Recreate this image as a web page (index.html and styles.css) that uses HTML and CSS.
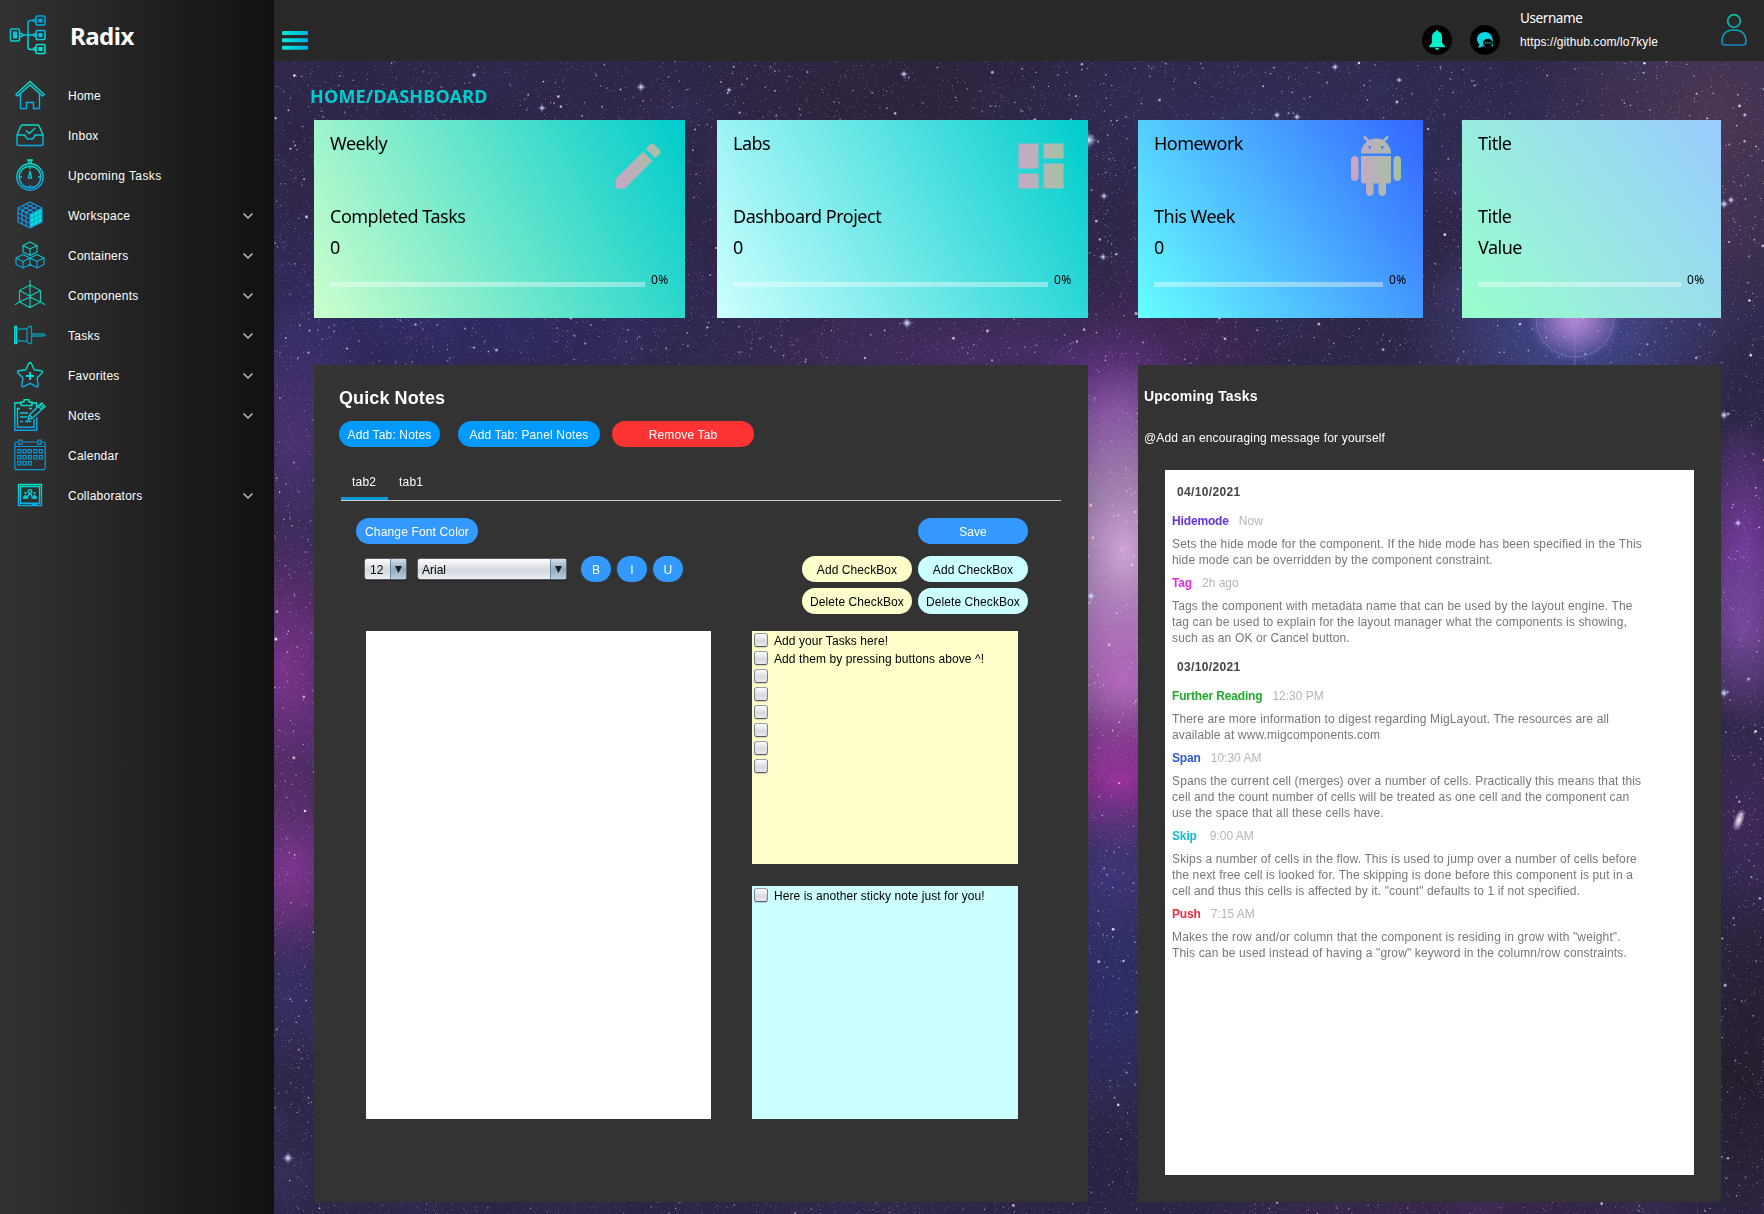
FILE: index.html
```html
<!DOCTYPE html>
<html lang="en">
<head>
<meta charset="utf-8">
<title>Radix</title>
<link rel="stylesheet" href="styles.css">
</head>
<body>
<svg class="defs" width="0" height="0" aria-hidden="true">
  <defs>
    <linearGradient id="down" gradientUnits="userSpaceOnUse" x1="0" y1="2" x2="0" y2="30"><stop offset="0" stop-color="#00e8c4"/><stop offset="1" stop-color="#0aa2ea"/></linearGradient>
    <linearGradient id="up" gradientUnits="userSpaceOnUse" x1="0" y1="2" x2="0" y2="40"><stop offset="0" stop-color="#00a2e8"/><stop offset="1" stop-color="#00efd1"/></linearGradient>
    <linearGradient id="across" gradientUnits="userSpaceOnUse" x1="0" y1="0" x2="32" y2="0"><stop offset="0" stop-color="#00efd1"/><stop offset="1" stop-color="#00a2ea"/></linearGradient>
    <linearGradient id="pastel" gradientUnits="userSpaceOnUse" x1="2" y1="0" x2="22" y2="0"><stop offset="0" stop-color="#c9a5c7"/><stop offset="1" stop-color="#a5c2a4"/></linearGradient>
  </defs>
</svg>

<aside class="sidebar">
  <div class="brand">
    <svg class="logo" width="38" height="42" viewBox="0 0 38 42" fill="none" stroke="url(#up)" stroke-width="1.5">
      <rect x="1.5" y="15" width="9" height="12" rx="1.5"/><rect x="4" y="17.5" width="4" height="7" fill="url(#up)" stroke="none"/>
      <rect x="27" y="2" width="9" height="9" rx="1.2"/><rect x="29.5" y="4.500" width="4" height="4" fill="url(#up)" stroke="none"/>
      <rect x="27" y="16.500" width="9" height="9" rx="1.200"/><rect x="29.500" y="19" width="4" height="4" fill="url(#up)" stroke="none"/>
      <rect x="27" y="30.500" width="9" height="9" rx="1.200"/><rect x="29.500" y="33" width="4" height="4" fill="url(#up)" stroke="none"/>
      <path d="M14 20.980 25 21M24 6.500h-2.500q-2.500 0-2.500 2.500v24q0 2.500 2.500 2.500H24M10.500 19l3 1v2l-3 1M27 5l-2.500.8v1.400l2.500.8M27 19.500l-2.500.8v1.400l2.500.8M27 33.500l-2.500.8v1.400l2.500.8"/>
    </svg>
    <h1>Radix</h1>
  </div>
  <nav class="menu">
    <a class="item"><svg class="ic" viewBox="0 0 32 32"><path d="M1.800 15.500 16 2.500l14.200 13-1.700 1.600L16 6 3.500 17.100zM6.500 15v14.500h6v-6h7v6h6V15"/></svg><span>Home</span></a>
    <a class="item"><svg class="ic" viewBox="0 0 32 32"><path d="M3 16 7 6.800Q7.500 6 8.500 6h15q1 0 1.500.8L29 16v8.500q0 2-2 2H5q-2 0-2-2zM3 16h8c1 5.500 9 5.500 10 0h8M12 11.500l3.200 3 6-5.500"/></svg><span>Inbox</span></a>
    <a class="item wide"><svg class="ic" viewBox="0 0 32 32"><circle cx="16" cy="18" r="13.200"/><circle cx="16" cy="18" r="10.800"/><path d="M13 1h6M14.800 1v3.500M17.200 1v3.500M16 7.500V10M16 26v2.500M5.500 18H8M24 18h2.500M16 13l-1.500 4.500v1.500h3v-1.500z"/></svg><span>Upcoming Tasks</span></a>
    <a class="item"><svg class="ic cube" viewBox="0 0 32 32"><path class="side" d="M16 15.500 28 9.500V23L16 29z"/><path d="M16 3l12 6v14l-12 6-12-6V9zM4 9l12 6.500L28 9M16 15.500V29M8 7l12 6.500M12 5l12 6M24 7l-12 6.500M20 5 8 11M8 11.200V25M12 13.300V27M4 13.700l12 6.300M4 18.300l12 6.200"/><path class="grid" d="M20 13.500V27M24 11.500V25M16 20l12-6.300M16 24.500l12-6.200"/></svg><span>Workspace</span><svg class="chev" viewBox="0 0 12 8"><path d="m1.500 1.500 4.500 4.500 4.500-4.500"/></svg></a>
    <a class="item"><svg class="ic thin" viewBox="0 0 32 32"><path d="M16 3l7 3.500V13l-7 3.500L9 13V6.500zM9 6.500l7 3.500 7-3.500M16 10v6.500M9 15.500l7 3.500v6.500L9 29l-7-3.500V19zM2 19l7 3.500 7-3.500M9 22.500V29M23 15.500l7 3.500v6.500L23 29l-7-3.500V19zM16 19l7 3.500 7-3.500M23 22.500V29"/></svg><span>Containers</span><svg class="chev" viewBox="0 0 12 8"><path d="m1.500 1.500 4.500 4.500 4.500-4.500"/></svg></a>
    <a class="item"><svg class="ic green" viewBox="0 0 32 32"><path d="M16 1v5l10.500 5.500V23L16 28.500 5.500 23V11.500L16 6M5.500 11.500 16 17l10.500-5.500M16 17v11.500M.8 25.800 5.500 23 16 18l10.500 5 4.700 2.800M16 6v11"/></svg><span>Components</span><svg class="chev" viewBox="0 0 12 8"><path d="m1.500 1.500 4.500 4.500 4.500-4.500"/></svg></a>
    <a class="item"><svg class="ic pin" viewBox="0 0 32 32"><path class="cap" d="M.8 7.500h1.700v17H.8z"/><path d="M2.500 10.500l10.500-1M2.500 21.500l10.500 1M15 7.500l-2 2v13l2 2h2.500v-17zM17.500 15H30l1.300 1-1.300 1H17.500z"/></svg><span>Tasks</span><svg class="chev" viewBox="0 0 12 8"><path d="m1.500 1.500 4.500 4.500 4.500-4.500"/></svg></a>
    <a class="item"><svg class="ic" viewBox="0 0 32 32"><path d="M14.700 4.500q1.300-2 2.600 0l3 6.300 6.700 1q2.500.6.800 2.500L23 19l1.200 7q.2 2.400-2.100 1.600L16 24.300l-6.100 3.300q-2.300.8-2.100-1.600L9 19l-4.800-4.700q-1.700-1.900.8-2.500l6.700-1z"/><path class="bold" d="M16 13v8M12 17h8"/></svg><span>Favorites</span><svg class="chev" viewBox="0 0 12 8"><path d="m1.500 1.500 4.500 4.500 4.500-4.500"/></svg></a>
    <a class="item"><svg class="ic" viewBox="0 0 32 32"><path d="M7 4H.8v27.200h22V18.500M17 4h5.500v5M7 6.500V3h3V.8h5V3h3v3.500zM6 9.500H3.500v18.800H20V20M15 9.500h3M6 14h8M6 18h7M6 22.500h3M11 22.500h6M27.500 4l3.500 3.500L18.500 19l-4.500 2 1.300-5zM15.300 16l3.200 3M24 7l3.500 3.500M26 5.500l3.500 3.500"/></svg><span>Notes</span><svg class="chev" viewBox="0 0 12 8"><path d="m1.500 1.500 4.500 4.500 4.500-4.500"/></svg></a>
    <a class="item"><svg class="ic blue" viewBox="0 0 32 32"><path d="M5 3H3Q.8 3 .8 5.500v22.700q0 2.500 2.200 2.500h26q2.200 0 2.200-2.500V5.500Q31.200 3 29 3h-2M9 3h14M5 1h3v4.500H5zM24 1h3v4.500h-3zM.8 7.500h30.400M3.800 10.500h3v3.500h-3zM9 10.500h3v3.500H9zM14.300 10.500h3v3.500h-3zM19.800 10.500h3v3.500h-3zM25.200 10.500h3v3.500h-3zM3.800 16.500h3V20h-3zM9 16.500h3V20H9zM14.300 16.500h3V20h-3zM19.800 16.500h3V20h-3zM25.200 16.500h3V20h-3zM3.800 22.500h3V26h-3zM9 22.500h3V26H9zM14.300 22.500h3V26h-3z"/></svg><span>Calendar</span></a>
    <a class="item"><svg class="ic" viewBox="0 0 32 32"><path d="M4.500 5.500h23v21h-23zM6.500 7.500h19v16.800h-19zM18 25.300h5"/><path class="solid" d="M9 20q0-4 2.500-4 2 0 2 4zM18.500 20q0-4 2-4 2.500 0 2.500 4z"/><path d="M13.800 19.500q0-4.500 2.200-4.500t2.200 4.500"/><circle cx="16" cy="12.500" r="1.800"/><circle class="solid" cx="11.500" cy="14" r="1.200"/><circle class="solid" cx="20.500" cy="14" r="1.200"/></svg><span>Collaborators</span><svg class="chev" viewBox="0 0 12 8"><path d="m1.500 1.500 4.500 4.500 4.500-4.500"/></svg></a>
  </nav>
</aside>

<div class="page">
  <header class="topbar">
    <svg class="burger" width="28" height="20" viewBox="0 0 28 20" fill="url(#across)"><rect x="1" y="0" width="26" height="4" rx="1.200"/><rect x="1" y="7.300" width="26" height="4" rx="1.200"/><rect x="1" y="14.800" width="26" height="4" rx="1.200"/></svg>
    <svg class="round" viewBox="0 0 30 30"><circle cx="15" cy="15" r="15"/><path fill="#00efd1" d="M15 5q1.200 0 1.300 1.500Q20 7.500 20 12v5.500l3 4v.8H7v-.8l3-4V12q0-4.500 3.700-5.500Q13.800 5 15 5zM13 23h4q-.5 2-2 2t-2-2z"/></svg>
    <svg class="round chat" viewBox="0 0 30 30"><circle cx="15" cy="15" r="15"/><path fill="#00d5e2" d="M15 7c-4.500 0-8 3-8 7.200 0 2.300 1 4.200 2.600 5.400L8 22.500c2 0 3.500-.5 4.500-1.300h10.800q-.8-1.500-.5-2.500C23.500 11.500 20 7 15 7z"/><ellipse cx="17.800" cy="17.800" rx="4.800" ry="4"/><path fill="#00e0e0" d="M15 17.200h1.300v1.300H15zM17.200 17.200h1.300v1.300h-1.300zM19.400 17.200h1.300v1.300h-1.300z"/></svg>
    <div class="user"><div class="name">Username</div><div class="url">https://github.com/lo7kyle</div></div>
    <svg class="person" width="26" height="34" viewBox="0 0 26 34" fill="none" stroke="url(#down)" stroke-width="1.700" opacity=".8"><circle cx="13" cy="8" r="6.300"/><path d="M4 32q-3 0-3-3 0-12 12-12t12 12q0 3-3 3z"/></svg>
  </header>

  <main class="stage">
    <canvas class="sky" id="sky" width="1490" height="1153"></canvas>
    <div class="content">
      <h2 class="crumb">HOME/DASHBOARD</h2>
      <div class="board">
        <div class="cards">
          <section class="card weekly"><div class="head"><h3>Weekly</h3><svg class="big" viewBox="0 0 24 24"><path d="M3 17.250V21h3.750L17.810 9.940l-3.750-3.750L3 17.250zM20.710 7.040c.39-.39.39-1.020 0-1.410l-2.340-2.340c-.39-.39-1.020-.39-1.410 0l-1.830 1.830 3.750 3.750 1.830-1.830z"/></svg></div><p>Completed Tasks</p><p class="val">0</p><div class="meter"><i></i><span>0%</span></div></section>
          <section class="card labs"><div class="head"><h3>Labs</h3><svg class="big" viewBox="0 0 24 24"><path d="M3 13h8V3H3v10zm0 8h8v-6H3v6zm10 0h8V11h-8v10zm0-18v6h8V3h-8z"/></svg></div><p>Dashboard Project</p><p class="val">0</p><div class="meter"><i></i><span>0%</span></div></section>
        </div>
        <div class="cards">
          <section class="card homework"><div class="head"><h3>Homework</h3><svg class="big" viewBox="0 0 24 24"><path d="M6 18c0 .55.45 1 1 1h1v3.500c0 .83.67 1.500 1.500 1.500s1.500-.67 1.500-1.500V19h2v3.500c0 .83.67 1.500 1.500 1.500s1.500-.67 1.500-1.500V19h1c.55 0 1-.45 1-1V8H6v10zM3.500 8C2.670 8 2 8.670 2 9.500v7c0 .83.67 1.500 1.500 1.500S5 17.330 5 16.500v-7C5 8.670 4.330 8 3.500 8zm17 0c-.83 0-1.500.67-1.500 1.500v7c0 .83.67 1.500 1.500 1.500s1.500-.67 1.500-1.500v-7c0-.83-.67-1.500-1.500-1.500zm-4.970-5.840l1.300-1.300c.2-.2.2-.51 0-.71-.2-.2-.51-.2-.71 0l-1.480 1.480C13.850 1.230 12.950 1 12 1c-.96 0-1.860.23-2.660.63L7.850.15c-.2-.2-.51-.2-.71 0-.2.2-.2.51 0 .71l1.310 1.310C6.970 3.260 6 5.010 6 7h12c0-1.990-.97-3.750-2.470-4.840zM10 5H9V4h1v1zm5 0h-1V4h1v1z"/></svg></div><p>This Week</p><p class="val">0</p><div class="meter"><i></i><span>0%</span></div></section>
          <section class="card blank"><div class="head"><h3>Title</h3></div><p>Title</p><p class="val">Value</p><div class="meter"><i></i><span>0%</span></div></section>
        </div>

        <section class="panel notes">
          <h3 class="title">Quick Notes</h3>
          <div class="actions"><button class="btn w1">Add Tab: Notes</button><button class="btn w2">Add Tab: Panel Notes</button><button class="btn w3 red">Remove Tab</button></div>
          <div class="tabs"><span class="tab on">tab2</span><span class="tab">tab1</span></div>
          <div class="tools">
            <div class="format">
              <button class="btn soft font">Change Font Color</button>
              <div class="line">
                <div class="combo size"><span>12</span><b></b></div>
                <div class="combo face"><span>Arial</span><b></b></div>
                <button class="btn soft sq">B</button><button class="btn soft sq">I</button><button class="btn soft sq">U</button>
              </div>
            </div>
            <div class="checks">
              <button class="btn soft save">Save</button>
              <button class="btn yellow">Add CheckBox</button><button class="btn cyan">Add CheckBox</button>
              <button class="btn yellow">Delete CheckBox</button><button class="btn cyan">Delete CheckBox</button>
            </div>
          </div>
          <div class="sheets">
            <div class="paper"></div>
            <div class="stickies">
              <ul class="sticky yellow"><li><i></i>Add your Tasks here!</li><li><i></i>Add them by pressing buttons above ^!</li><li><i></i></li><li><i></i></li><li><i></i></li><li><i></i></li><li><i></i></li><li><i></i></li></ul>
              <ul class="sticky cyan"><li><i></i>Here is another sticky note just for you!</li></ul>
            </div>
          </div>
        </section>

        <section class="panel upcoming">
          <h3 class="title">Upcoming Tasks</h3>
          <p class="cheer">@Add an encouraging message for yourself</p>
          <div class="feed">
            <h4>04/10/2021</h4>
            <div class="post"><b class="violet">Hidemode</b><time>Now</time></div>
            <p>Sets the hide mode for the component. If the hide mode has been specified in the This<br>hide mode can be overridden by the component constraint.</p>
            <div class="post"><b class="pink">Tag</b><time>2h ago</time></div>
            <p>Tags the component with metadata name that can be used by the layout engine. The<br>tag can be used to explain for the layout manager what the components is showing,<br>such as an OK or Cancel button.</p>
            <h4>03/10/2021</h4>
            <div class="post"><b class="green">Further Reading</b><time>12:30 PM</time></div>
            <p>There are more information to digest regarding MigLayout. The resources are all<br>available at www.migcomponents.com</p>
            <div class="post"><b class="blue">Span</b><time>10:30 AM</time></div>
            <p>Spans the current cell (merges) over a number of cells. Practically this means that this<br>cell and the count number of cells will be treated as one cell and the component can<br>use the space that all these cells have.</p>
            <div class="post"><b class="teal">Skip</b><time>9:00 AM</time></div>
            <p>Skips a number of cells in the flow. This is used to jump over a number of cells before<br>the next free cell is looked for. The skipping is done before this component is put in a<br>cell and thus this cells is affected by it. "count" defaults to 1 if not specified.</p>
            <div class="post"><b class="scarlet">Push</b><time>7:15 AM</time></div>
            <p>Makes the row and/or column that the component is residing in grow with "weight".<br>This can be used instead of having a "grow" keyword in the column/row constraints.</p>
          </div>
        </section>
      </div>
    </div>
  </main>
</div>
<script src="sky.js"></script>
</body>
</html>
```
FILE: styles.css
```css
* { box-sizing: border-box; margin: 0; padding: 0; }
body {
  display: flex;
  width: 1764px;
  height: 1214px;
  overflow: hidden;
  background: #282828;
  color: #fff;
  font: 12px/16px "Liberation Sans", Arial, sans-serif;
  letter-spacing: .2px;
  white-space: nowrap;
}
.defs { position: absolute; }
ul { list-style: none; }

/* sidebar */
.sidebar { flex: none; width: 274px; background: linear-gradient(90deg, #333, #111); }
.brand { display: flex; height: 75px; padding: 14px 0 0 9px; }
.brand h1 { margin: 4px 0 0 23px; font: bold 24px/36px "Noto Sans", "Open Sans", sans-serif; letter-spacing: -.5px; }
.item { display: flex; align-items: center; height: 40px; padding: 0 20px 0 14px; letter-spacing: .25px; }
.item.wide { letter-spacing: .42px; }
.item span { flex: 1; margin: 1px 0 0 22px; }
.ic { width: 32px; height: 32px; fill: none; stroke: url(#down); stroke-width: 1.4; }
.ic .solid { fill: #06c8d0; stroke: none; }
.ic.thin { stroke-width: 1.1; }
.ic.green { stroke: #0fc7b5; stroke-width: 1.2; }
.ic.pin { stroke: #0b93ae; }
.ic.pin .cap { stroke: #00e0d8; }
.ic.blue { stroke: #0b9bdc; stroke-width: 1.2; }
.ic .bold { stroke: #00e0e8; stroke-width: 1.8; }
.ic.cube { stroke: #1597e5; stroke-width: 1.2; }
.ic.cube .side { fill: #00e5df; stroke: none; }
.ic.cube .grid { stroke: #0d8fb8; stroke-width: .8; }
.chev { width: 12px; height: 8px; margin-top: 1px; fill: none; stroke: #bbb; stroke-width: 1.5; }

/* top bar */
.page { display: flex; flex-direction: column; flex: 1; }
.topbar { display: flex; height: 61px; padding-left: 7px; background: #282828; }
.burger { margin: 30.5px auto 0 0; }
.round { width: 30px; height: 30px; margin: 25px 18px 0 0; }
.round.chat { margin-right: 20px; }
.user { width: 201px; padding-top: 9px; }
.name { font: 13.5px/18px "Noto Sans", "Open Sans", sans-serif; letter-spacing: -.4px; }
.url { margin-top: 7px; letter-spacing: .1px; }
.person { margin: 13px 17px 0 0; }

/* stage */
.stage { display: grid; flex: 1; background: #30284c; }
.sky, .content { grid-area: 1 / 1; }
.content { z-index: 1; padding: 0 43px 12px 40px; }
.crumb { height: 59px; margin-left: -4px; padding-top: 23px; color: #0cc; font: bold 18px/25px "Noto Sans", "Open Sans", sans-serif; letter-spacing: .2px; }
.board { display: grid; grid-template: 198px 837px / 774px 583px; gap: 47px 50px; }
.cards { display: flex; justify-content: space-between; }

.card { width: 371px; padding: 16px; color: #000; font: 18px/24px "Noto Sans", "Open Sans", sans-serif; letter-spacing: -.5px; }
.card h3 { margin-top: -5px; font: inherit; }
.head { display: flex; justify-content: space-between; height: 68px; }
.big { width: 60px; height: 60px; margin-right: 1px; fill: url(#pastel); }
.val { margin-top: 7px; }
.meter { display: flex; margin-top: 8px; }
.meter i { flex: 1; height: 5px; margin: 15px 6px 0 0; background: rgba(255, 255, 255, .4); }
.meter span { width: 18px; margin-top: 5px; font-size: 12px; line-height: 16px; letter-spacing: .4px; }
.weekly { background: linear-gradient(61.9deg, #cfc, #0cc); }
.labs { background: linear-gradient(61.9deg, #cff, #0cc); }
.homework { width: 285px; background: linear-gradient(55.2deg, #6ff, #36f); }
.blank { width: 259px; background: linear-gradient(52.6deg, #9fc, #9cf); }

/* quick notes */
.panel { background: #333; }
.notes .title { padding: 22px 0 0 25px; font-size: 18px; line-height: 22px; letter-spacing: .1px; }
.actions { display: flex; margin: 12px 0 0 25px; }
.btn { height: 26px; border: 0; border-radius: 13px; background: #09f; color: #fff; font: inherit; letter-spacing: .15px; padding-top: 1px; }
.btn.soft { background: #39f; }
.btn.red { background: #f33; }
.btn.yellow { background: #ffc; color: #000; }
.btn.cyan { background: #cff; color: #000; }
.w1 { width: 101px; margin-right: 18px; }
.w2 { width: 142px; margin-right: 12px; }
.w3 { width: 142px; }
.tabs { display: flex; width: 720px; height: 34px; margin: 20px 0 0 27px; border-bottom: 1px solid #ccc; }
.tab { width: 47px; padding: 7px 0 0 11px; }
.tab.on { border-bottom: 3px solid #0a9bd8; }
.tools { display: flex; justify-content: space-between; height: 96px; margin: 17px 60px 0 42px; }
.font { width: 122px; }
.line { display: flex; align-items: center; margin-top: 12px; }
.combo { display: flex; height: 22px; padding-left: 5px; border: 1px solid #5b6068; border-radius: 3px; background: linear-gradient(#fff, #d3d7de 55%, #eceef2); color: #000; box-shadow: 0 1px 1px #222; }
.combo span { flex: 1; padding-top: 3px; }
.combo b { display: flex; justify-content: center; width: 16px; border-left: 1px solid #6d8699; background: linear-gradient(#d5e0ea, #94aabd 50%, #b9cfe0); }
.combo b::after { content: ""; width: 7px; height: 7px; margin-top: 7px; background: #1b1b1b; clip-path: polygon(0 0, 100% 0, 50% 100%); }
.size { width: 43px; margin: 0 10px 0 8px; }
.face { width: 150px; margin-right: 14px; padding-left: 4px; letter-spacing: 0; }
.sq { width: 30px; margin-right: 6px; }
.checks { display: grid; grid-template: 38px 32px 26px / 110px 110px; column-gap: 6px; }
.checks .btn { letter-spacing: .08px; }
.save { grid-column: 2; }
.sheets { display: flex; gap: 41px; margin: 17px 0 0 52px; }
.paper { width: 345px; height: 488px; background: #fff; }
.stickies { display: grid; grid-template: 233px 233px / 266px; row-gap: 22px; }
.sticky { padding: 1px 0 0 2px; color: #000; letter-spacing: .08px; }
.sticky.yellow { background: #ffc; }
.sticky.cyan { background: #cff; }
.sticky li { display: flex; gap: 6px; height: 18px; line-height: 18px; }
.sticky i { width: 14px; height: 14px; margin-top: 1px; border: 1px solid #6f747e; border-color: #9a9ea6 #7d818b #555a66; border-radius: 3px; background: linear-gradient(#fdfdfe, #d6d9df 60%, #e8eaee); box-shadow: 0 1px 0 rgba(0, 0, 0, .15); }

/* upcoming */
.upcoming .title { padding: 22px 0 0 6px; font-size: 14px; line-height: 18px; letter-spacing: .2px; }
.cheer { margin: 25px 0 0 6px; letter-spacing: .17px; }
.feed { width: 529px; height: 705px; margin: 24px 0 0 27px; padding: 14px 0 0 7px; background: #fff; color: #777; letter-spacing: .14px; }
.feed h4 { margin: 0 0 13px 5px; color: #444; font-size: 12px; letter-spacing: .35px; }
.feed p { margin: 7px 0; }
.feed p + h4 { margin-top: 13px; }
.post { display: flex; gap: 10px; letter-spacing: 0; }
.post b { letter-spacing: -.15px; }
.post time { color: #b5b5b5; }
.violet { color: #6133e8; }
.pink { color: #dc2fe6; }
.green { color: #20ac2c; }
.blue { color: #2c58d8; }
.teal { margin-right: 3px; color: #16b9cf; }
.scarlet { color: #f32c42; }
```
FILE: sky.js
```js
// Paints the starfield behind the dashboard.
const ctx = document.getElementById('sky').getContext('2d');
const W = 1490, H = 1153;
ctx.fillStyle = '#2f2749';
ctx.fillRect(0, 0, W, H);

const blob = (x, y, rx, ry, rgb, a) => {
  ctx.save();
  ctx.translate(x, y);
  ctx.scale(rx, ry);
  const g = ctx.createRadialGradient(0, 0, 0, 0, 0, 1);
  g.addColorStop(0, `rgba(${rgb},${a})`);
  g.addColorStop(.5, `rgba(${rgb},${a * .55})`);
  g.addColorStop(1, `rgba(${rgb},0)`);
  ctx.fillStyle = g;
  ctx.fillRect(-1, -1, 2, 2);
  ctx.restore();
};

let seed = 7;
const rnd = () => (seed = (seed * 16807) % 2147483647) / 2147483647;

// Uneven patches keep the clouds from looking smooth
const patches = ['80,64,130', '30,22,50', '80,46,96', '40,50,110'];
for (let i = 0; i < 500; i++) {
  blob(rnd() * W, rnd() * H, 10 + rnd() * 40, 10 + rnd() * 40, patches[i % 4], .1 + rnd() * .12);
}

// Nebula clouds: x, y, horizontal radius, vertical radius, colour, alpha
const clouds = [
  [150, 260, 380, 130, '46,44,108', .7], [620, 40, 260, 120, '42,34,54', .7],
  [1000, 60, 300, 100, '48,48,96', .7], [1440, 60, 200, 240, '84,62,90', .7],
  [700, 290, 300, 70, '84,48,120', .5], [900, 290, 120, 120, '74,36,92', .6],
  [1300, 270, 170, 130, '78,96,190', .6], [1301, 257, 48, 44, '215,155,235', .8],
  [20, 380, 90, 150, '84,54,130', .7], [10, 610, 90, 150, '135,52,150', .85],
  [15, 810, 80, 110, '145,56,160', .8], [15, 930, 60, 80, '60,50,120', .6],
  [838, 350, 90, 90, '120,60,160', .8],
  [850, 490, 110, 190, '215,170,222', .95], [850, 620, 90, 110, '205,110,212', .75],
  [845, 720, 80, 80, '165,50,165', .9], [840, 810, 80, 90, '72,60,140', .7],
  [840, 930, 90, 150, '44,50,120', .7], [850, 1110, 160, 80, '40,32,62', .6],
  [1470, 480, 60, 120, '125,60,165', .85], [1470, 570, 60, 100, '135,80,175', .75],
  [1470, 760, 60, 120, '66,40,96', .7], [1470, 1010, 120, 210, '36,27,42', .9],
  [1200, 1150, 260, 60, '80,38,84', .3]
];
for (const c of clouds) blob(...c);

const tints = ['255,255,255', '225,205,235', '190,190,245', '240,190,200'];
for (let i = 0; i < 60000; i++) {
  ctx.fillStyle = `rgba(${tints[i % 4]},${.05 + rnd() * .22})`;
  ctx.fillRect(Math.floor(rnd() * W), Math.floor(rnd() * H), 1, 1);
}
for (let i = 0; i < 7000; i++) {
  ctx.fillStyle = `rgba(${tints[i % 4]},${.25 + rnd() * .5})`;
  ctx.beginPath();
  ctx.arc(rnd() * W, rnd() * H, .4 + rnd() * .6, 0, 7);
  ctx.fill();
}
for (let i = 0; i < 500; i++) {
  ctx.fillStyle = `rgba(${tints[i % 4]},.8)`;
  ctx.beginPath();
  ctx.arc(rnd() * W, rnd() * H, 1 + rnd() * .6, 0, 7);
  ctx.fill();
}

// Bright stars: x, y, radius
const bright = [
  [367, 26, 2.500], [815, 79, 4.500], [1061, 6, 2], [1003, 54, 2], [1023, 56, 2],
  [1450, 143, 2.500], [1457, 139, 2], [633, 262, 3], [268, 47, 2], [630, 13, 2],
  [1125, 19, 1.500], [14, 1097, 3], [817, 535, 2.500], [1450, 354, 2.500], [1464, 462, 2],
  [200, 14, 1.500], [455, 29, 1.500], [829, 196, 2], [830, 135, 2], [1450, 632, 2.500]
];
for (const [x, y, r] of bright) {
  const g = ctx.createRadialGradient(x, y, 0, x, y, r * 1.6);
  g.addColorStop(0, 'rgba(255,255,255,.95)');
  g.addColorStop(.4, 'rgba(205,215,255,.6)');
  g.addColorStop(1, 'rgba(160,180,255,0)');
  ctx.fillStyle = g;
  ctx.fillRect(x - 9, y - 9, 18, 18);
  ctx.fillStyle = 'rgba(190,210,255,.25)';
  ctx.fillRect(x - r * 2.200, y - .5, r * 4.400, 1);
  ctx.fillRect(x - .5, y - r * 2.200, 1, r * 4.400);
}

// Distant galaxy on the right edge
ctx.save();
ctx.translate(1465, 759);
ctx.rotate(.35);
blob(0, 0, 5, 12, '255,240,255', 1);
ctx.restore();

ctx.strokeStyle = 'rgba(120,140,235,.55)';
ctx.beginPath();
ctx.arc(1301, 257, 39, 0, Math.PI);
ctx.moveTo(1301, 257);
ctx.lineTo(1301, 304);
ctx.stroke();
```
